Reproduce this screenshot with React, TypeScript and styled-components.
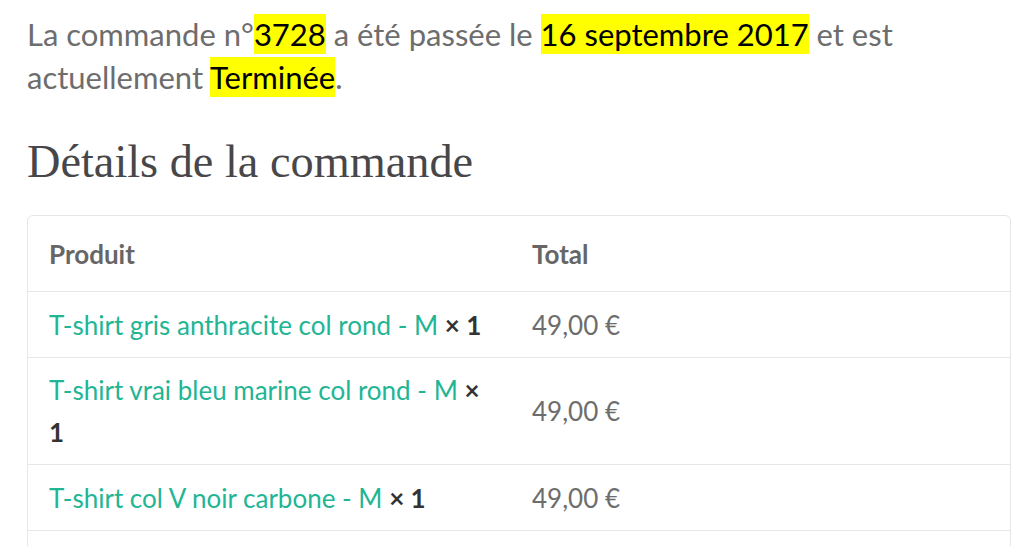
import React from 'react';
import styled, { createGlobalStyle } from 'styled-components';

const GlobalStyle = createGlobalStyle`
    html, body {
        margin: 0;
        padding: 0;
        background: #ffffff;
    }
    body {
        font-family: Lato, "Open Sans", sans-serif;
        color: #6d6d6d;
    }
`;

const Page = styled.div`
    padding: 13px 13px 0 27px;
`;

const Intro = styled.p`
    margin: 0;
    font-size: 31px;
    line-height: 43px;
    color: #6d6d6d;
`;

const Mark = styled.mark`
    background: #ffff00;
    color: #000000;
    padding: 1px 0;
`;

const Heading = styled.h2`
    margin: 36px 0 27px;
    font-family: "Liberation Serif", "DejaVu Serif", serif;
    font-weight: 400;
    font-size: 46.3px;
    line-height: 53px;
    color: #47474a;
`;

const Card = styled.div`
    border: 1px solid #e6e6e6;
    border-radius: 6px;
    overflow: hidden;
`;

const Table = styled.table`
    width: 100%;
    border-collapse: collapse;
    table-layout: fixed;
`;

const HeadCell = styled.th<{ $w?: number }>`
    width: ${(p) => (p.$w ? `${p.$w}px` : 'auto')};
    text-align: left;
    padding: 16.5px 21px;
    font-size: 26px;
    line-height: 42px;
    font-weight: 700;
    color: #666666;
    border-bottom: 1px solid #e6e6e6;
`;

const Cell = styled.td`
    padding: 11.5px 21px 11px;
    font-size: 26px;
    line-height: 42px;
    vertical-align: middle;
    color: #6d6d6d;
    border-bottom: 1px solid #e6e6e6;
`;

const ProductLink = styled.a`
    color: #22b594;
    text-decoration: none;
`;

const Qty = styled.strong`
    color: #333333;
    font-weight: 700;
`;

const items = [
    { name: 'T-shirt gris anthracite col rond - M', qty: 1, total: '49,00 €' },
    { name: 'T-shirt vrai bleu marine col rond - M', qty: 1, total: '49,00 €' },
    { name: 'T-shirt col V noir carbone - M', qty: 1, total: '49,00 €' },
];

export default function App() {
    return (
        <Page>
            <GlobalStyle />
            <Intro>
                La commande n°<Mark>3728</Mark> a été passée le <Mark>16 septembre 2017</Mark> et est
                actuellement <Mark>Terminée</Mark>.
            </Intro>
            <Heading>Détails de la commande</Heading>
            <Card>
                <Table>
                    <thead>
                        <tr>
                            <HeadCell $w={441}>Produit</HeadCell>
                            <HeadCell>Total</HeadCell>
                        </tr>
                    </thead>
                    <tbody>
                        {items.map((item) => (
                            <tr key={item.name}>
                                <Cell>
                                    <ProductLink href="#">{item.name}</ProductLink>{' '}
                                    <Qty>× {item.qty}</Qty>
                                </Cell>
                                <Cell>{item.total}</Cell>
                            </tr>
                        ))}
                        <tr>
                            <Cell>Sous-total :</Cell>
                            <Cell>147,00 €</Cell>
                        </tr>
                    </tbody>
                </Table>
            </Card>
        </Page>
    );
}
